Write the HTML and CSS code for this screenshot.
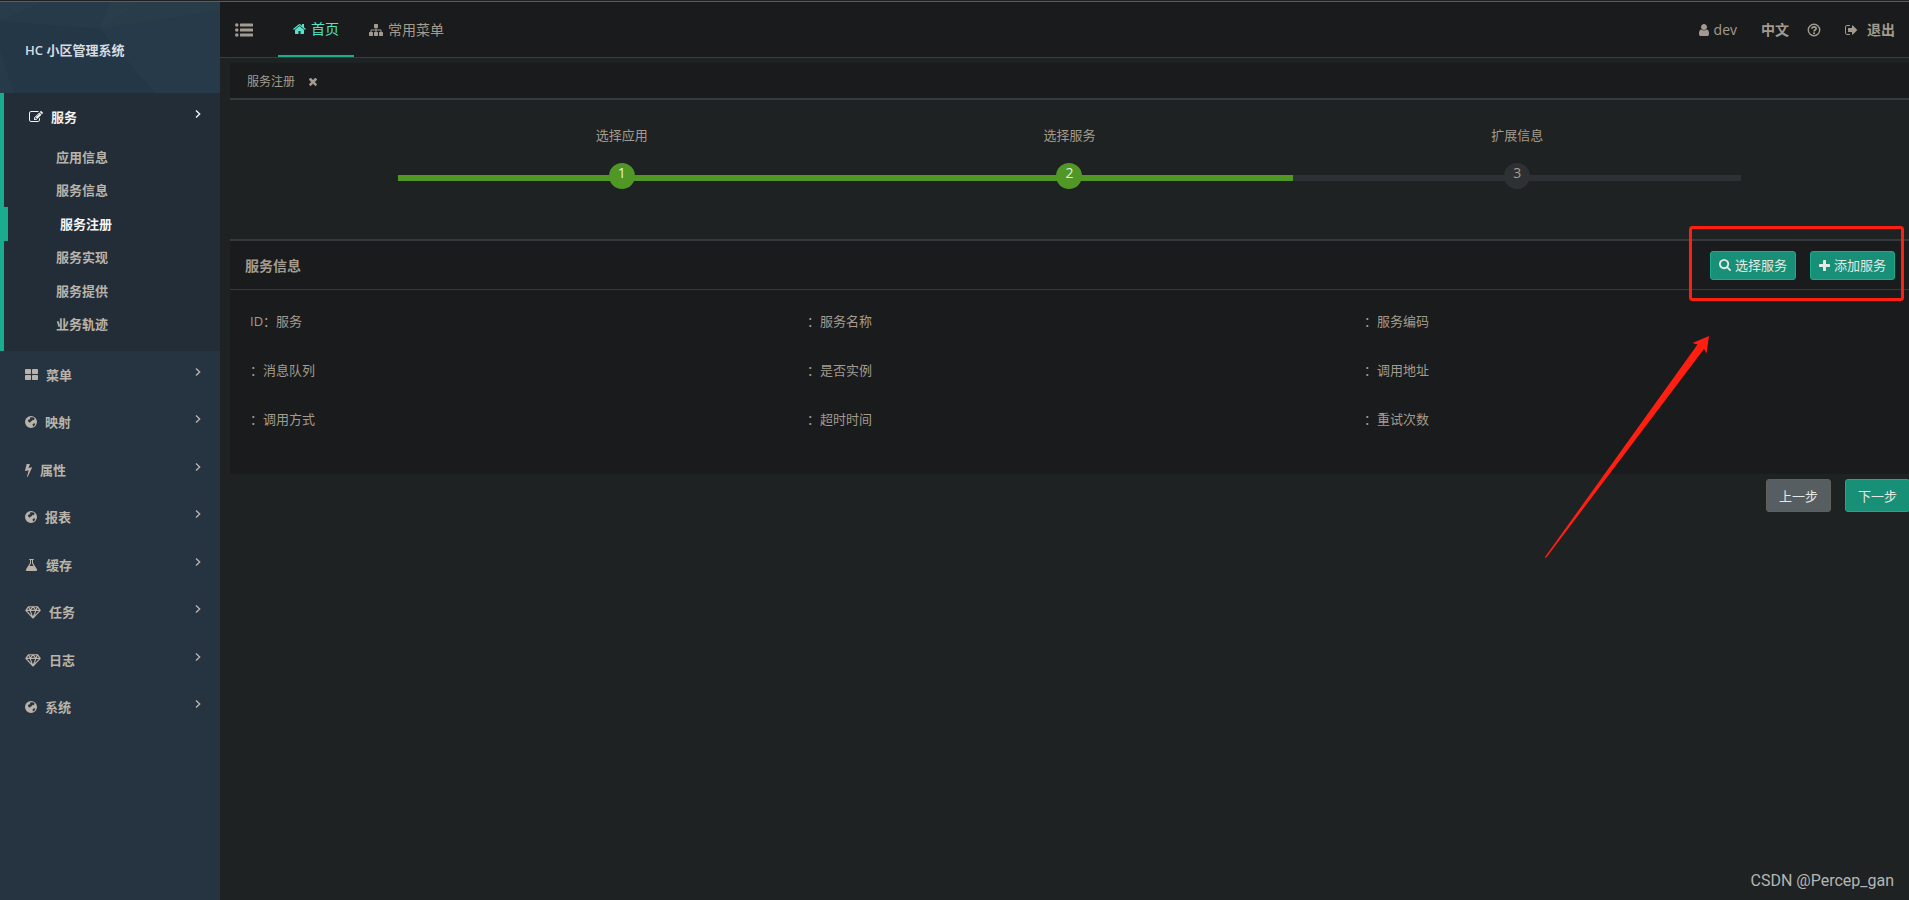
FILE: index.html
```html
<!DOCTYPE html>
<html lang="zh-CN">
<head>
<meta charset="utf-8">
<title>HC 小区管理系统</title>
<link rel="stylesheet" href="styles.css">
</head>
<body>
<svg class="sprite" aria-hidden="true">
  <symbol id="home" viewBox="64 0 1664 1792"><path d="M1472 992v480q0 26-19 45t-45 19h-384v-384h-256v384h-384q-26 0-45-19t-19-45v-480q0-1 .5-3t.5-3l575-474 575 474q1 2 1 6zm223-69l-62 74q-8 9-21 11h-3q-13 0-21-7l-692-577-692 577q-12 8-24 7-13-2-21-11l-62-74q-8-10-7-23.500t11-21.500l719-599q32-26 76-26t76 26l244 204v-195q0-14 9-23t23-9h192q14 0 23 9t9 23v408l219 182q10 8 11 21.500t-7 23.500z"/></symbol>
  <symbol id="sitemap" viewBox="0 0 1792 1792"><path d="M1792 1248v320q0 40-28 68t-68 28h-320q-40 0-68-28t-28-68v-320q0-40 28-68t68-28h96v-192h-512v192h96q40 0 68 28t28 68v320q0 40-28 68t-68 28h-320q-40 0-68-28t-28-68v-320q0-40 28-68t68-28h96v-192h-512v192h96q40 0 68 28t28 68v320q0 40-28 68t-68 28h-320q-40 0-68-28t-28-68v-320q0-40 28-68t68-28h96v-192q0-52 38-90t90-38h512v-192h-96q-40 0-68-28t-28-68v-320q0-40 28-68t68-28h320q40 0 68 28t28 68v320q0 40-28 68t-68 28h-96v192h512q52 0 90 38t38 90v192h96q40 0 68 28t28 68z"/></symbol>
  <symbol id="list" viewBox="0 0 18 14"><circle cx="1.800" cy="2" r="1.800"/><circle cx="1.800" cy="7" r="1.800"/><circle cx="1.800" cy="12" r="1.800"/><rect x="5" y=".5" width="13" height="3" rx=".6"/><rect x="5" y="5.500" width="13" height="3" rx=".6"/><rect x="5" y="10.500" width="13" height="3" rx=".6"/></symbol>
  <symbol id="times" viewBox="302 238 1188 1316"><path d="M1490 1322q0 40-28 68l-136 136q-28 28-68 28t-68-28l-294-294-294 294q-28 28-68 28t-68-28l-136-136q-28-28-28-68t28-68l294-294-294-294q-28-28-28-68t28-68l136-136q28-28 68-28t68 28l294 294 294-294q28-28 68-28t68 28l136 136q28 28 28 68t-28 68l-294 294 294 294q28 28 28 68z"/></symbol>
  <symbol id="user" viewBox="256 0 1280 1792"><path d="M1536 1399q0 109-62.500 187t-150.500 78h-854q-88 0-150.500-78t-62.500-187q0-85 8.500-160.500t31.500-152 58.500-131 94-89 134.500-34.500q131 128 313 128t313-128q76 0 134.500 34.500t94 89 58.500 131 31.500 152 8.500 160.500zm-256-887q0 159-112.500 271.500t-271.500 112.500-271.500-112.500-112.500-271.500 112.500-271.500 271.500-112.500 271.500 112.500 112.500 271.500z"/></symbol>
  <symbol id="question" viewBox="0 0 14 14"><circle cx="7" cy="7" r="5.700" fill="none" stroke="currentColor" stroke-width="1.400"/><path d="M4.900 5.700C5.100 3.200 9.100 3.200 9.100 5.500 9.100 7 7.100 7 7.100 8.400" fill="none" stroke="currentColor" stroke-width="1.700"/><rect x="6.200" y="9.300" width="1.800" height="1.700"/></symbol>
  <symbol id="signout" viewBox="64 0 1664 1792"><path d="M704 1440q0 4 1 20t.5 26.500-3 23.500-10 19.500-20.500 6.500h-320q-119 0-203.500-84.500t-84.500-203.500v-704q0-119 84.500-203.500t203.500-84.500h320q13 0 22.500 9.500t9.500 22.500q0 4 1 20t.5 26.500-3 23.500-10 19.500-20.500 6.500h-320q-66 0-113 47t-47 113v704q0 66 47 113t113 47h312l11.500 1 11.500 3 8 5.500 7 9 2 13.500zm928-544q0 26-19 45l-544 544q-19 19-45 19t-45-19-19-45v-288h-448q-26 0-45-19t-19-45v-384q0-26 19-45t45-19h448v-288q0-26 19-45t45-19 45 19l544 544q19 19 19 45z"/></symbol>
  <symbol id="search" viewBox="64 128 1664 1664"><path d="M1216 832q0-185-131.500-316.500t-316.500-131.500-316.500 131.500-131.500 316.500 131.500 316.500 316.500 131.500 316.500-131.500 131.500-316.500zm512 832q0 52-38 90t-90 38q-54 0-90-38l-343-342q-179 124-399 124-143 0-273.500-55.500t-225-150-150-225-55.500-273.500 55.500-273.500 150-225 225-150 273.500-55.500 273.500 55.500 225 150 150 225 55.500 273.500q0 220-124 399l343 343q37 37 37 90z"/></symbol>
  <symbol id="plus" viewBox="192 128 1408 1408"><path d="M1600 736v192q0 40-28 68t-68 28h-416v416q0 40-28 68t-68 28h-192q-40 0-68-28t-28-68v-416h-416q-40 0-68-28t-28-68v-192q0-40 28-68t68-28h416v-416q0-40 28-68t68-28h192q40 0 68 28t28 68v416h416q40 0 68 28t28 68z"/></symbol>
  <symbol id="edit" viewBox="0 0 1792 1792"><path d="M888 1184l116-116-152-152-116 116v56h96v96h56zm440-720q-16-16-33 1l-350 350q-17 17-1 33t33-1l350-350q17-17 1-33zm80 594v190q0 119-84.500 203.500t-203.500 84.500h-832q-119 0-203.500-84.500t-84.500-203.500v-832q0-119 84.500-203.500t203.500-84.500h832q63 0 117 25 15 7 18 23 3 17-9 29l-49 49q-14 14-32 8-23-6-45-6h-832q-66 0-113 47t-47 113v832q0 66 47 113t113 47h832q66 0 113-47t47-113v-126q0-13 9-22l64-64q15-15 35-7t20 29zm-96-738l288 288-672 672h-288v-288zm444 132l-92 92-288-288 92-92q28-28 68-28t68 28l152 152q28 28 28 68t-28 68z"/></symbol>
  <symbol id="thlarge" viewBox="64 0 1664 1792"><path d="M832 1024v384q0 52-38 90t-90 38h-512q-52 0-90-38t-38-90v-384q0-52 38-90t90-38h512q52 0 90 38t38 90zm0-768v384q0 52-38 90t-90 38h-512q-52 0-90-38t-38-90v-384q0-52 38-90t90-38h512q52 0 90 38t38 90zm896 768v384q0 52-38 90t-90 38h-512q-52 0-90-38t-38-90v-384q0-52 38-90t90-38h512q52 0 90 38t38 90zm0-768v384q0 52-38 90t-90 38h-512q-52 0-90-38t-38-90v-384q0-52 38-90t90-38h512q52 0 90 38t38 90z"/></symbol>
  <symbol id="globe" viewBox="0 0 12 14"><path fill-rule="evenodd" d="M6 1a6 6 0 1 0 0 12A6 6 0 1 0 6 1zM4.900 2.500L6.500 2.200 8.700 2.600 9.600 3.800 8.800 5.200 7.600 4.800 6.900 6 5.400 6.800 5.100 7.800 3.700 6.900 2.800 5.800 3.600 4.600 5.300 4.200zM7.600 9.200l1.500-1 1.200.6-.8 1.700-1.500 1z"/></symbol>
  <symbol id="bolt" viewBox="448 0 896 1792"><path d="M1333 566q18 20 7 44l-540 1157q-13 25-42 25-4 0-14-2-17-5-25.500-19t-4.500-30l197-808-406 101q-4 1-12 1-18 0-31-11-18-15-13-39l201-825q4-14 16-23t28-9h328q19 0 32 12.500t13 29.500q0 8-5 18l-171 463 396-98q8-2 12-2 19 0 34 15z"/></symbol>
  <symbol id="flask" viewBox="64 0 1664 1792"><path d="M1591 1448q56 89 21.500 152.500t-140.500 63.500h-1152q-106 0-140.500-63.500t21.500-152.500l503-793v-399h-64q-26 0-45-19t-19-45 19-45 45-19h512q26 0 45 19t19 45-19 45-45 19h-64v399zm-779-725l-182 287h532l-182-287-20-31v-436h-128v436z"/></symbol>
  <symbol id="diamond" viewBox="0 0 16 14"><path d="M3.600 1.700h8.800l2.800 3.700L8 13 .8 5.400zM.8 5.400h14.400M3.600 1.700l1.500 3.700L8 13l2.900-7.600 1.500-3.700M5.100 5.400L8 1.700l2.900 3.700" fill="none" stroke="currentColor" stroke-width="1.150" stroke-linejoin="round"/></symbol>
  <symbol id="angle" viewBox="0 0 6 10"><path d="M1 1.400L4.700 5 1 8.600" fill="none" stroke="currentColor" stroke-width="1.400"/></symbol>
</svg>

<div class="topline"></div>
<div class="app">
  <aside class="sidebar">
    <div class="brand">
      <svg class="brand-art" viewBox="0 0 220 91" preserveAspectRatio="none" aria-hidden="true">
        <path d="M0 19L100 27 155 91H14L0 48z" fill="#243747"/>
        <path d="M110 0L142 0 100 27z" fill="#2a3d4b"/>
        <path d="M142 0H220V8L100 27z" fill="#293c4a"/>
        <path d="M0 0H44L0 19z" fill="#283c4b"/>
      </svg>
      <span class="brand-name">HC 小区管理系统</span>
    </div>
    <nav>
      <div class="group">
        <a class="menu-link" href="#"><svg class="i w14"><use href="#edit"/></svg>服务<svg class="arrow"><use href="#angle"/></svg></a>
        <ul class="sub">
          <li><a href="#">应用信息</a></li>
          <li><a href="#">服务信息</a></li>
          <li class="current"><a href="#">服务注册</a></li>
          <li><a href="#">服务实现</a></li>
          <li><a href="#">服务提供</a></li>
          <li><a href="#">业务轨迹</a></li>
        </ul>
      </div>
      <div class="menu">
        <a class="menu-link" href="#"><svg class="i w13"><use href="#thlarge"/></svg>菜单<svg class="arrow"><use href="#angle"/></svg></a>
        <a class="menu-link" href="#"><svg class="i w12"><use href="#globe"/></svg>映射<svg class="arrow"><use href="#angle"/></svg></a>
        <a class="menu-link" href="#"><svg class="i w7"><use href="#bolt"/></svg>属性<svg class="arrow"><use href="#angle"/></svg></a>
        <a class="menu-link" href="#"><svg class="i w12"><use href="#globe"/></svg>报表<svg class="arrow"><use href="#angle"/></svg></a>
        <a class="menu-link" href="#"><svg class="i w13"><use href="#flask"/></svg>缓存<svg class="arrow"><use href="#angle"/></svg></a>
        <a class="menu-link" href="#"><svg class="i w16"><use href="#diamond"/></svg>任务<svg class="arrow"><use href="#angle"/></svg></a>
        <a class="menu-link" href="#"><svg class="i w16"><use href="#diamond"/></svg>日志<svg class="arrow"><use href="#angle"/></svg></a>
        <a class="menu-link" href="#"><svg class="i w12"><use href="#globe"/></svg>系统<svg class="arrow"><use href="#angle"/></svg></a>
      </div>
    </nav>
  </aside>

  <main class="main">
    <header class="navbar">
      <button class="toggle" type="button" aria-label="切换菜单"><svg class="i w18"><use href="#list"/></svg></button>
      <a class="nav-tab active" href="#"><svg class="i w13"><use href="#home"/></svg>首页</a>
      <a class="nav-tab" href="#"><svg class="i w14"><use href="#sitemap"/></svg>常用菜单</a>
      <div class="nav-right">
        <a class="account" href="#"><svg class="i w10"><use href="#user"/></svg>dev</a>
        <a class="strong" href="#">中文</a>
        <a href="#" aria-label="帮助"><svg class="i w14"><use href="#question"/></svg></a>
        <a class="strong logout" href="#"><svg class="i w13"><use href="#signout"/></svg>退出</a>
      </div>
    </header>

    <div class="content">
      <div class="page-tabs">
        <a href="#">服务注册</a>
        <button class="close" type="button" aria-label="关闭"><svg class="x"><use href="#times"/></svg></button>
      </div>

      <ol class="steps">
        <li class="done"><span>选择应用</span><b>1</b></li>
        <li class="done"><span>选择服务</span><b>2</b></li>
        <li><span>扩展信息</span><b>3</b></li>
      </ol>

      <section class="panel">
        <div class="panel-head">
          <h2>服务信息</h2>
          <button class="btn" type="button"><svg class="i12"><use href="#search"/></svg>选择服务</button>
          <button class="btn" type="button"><svg class="i11"><use href="#plus"/></svg>添加服务</button>
        </div>
        <div class="fields">
          <div>ID：服务</div><div>：服务名称</div><div>：服务编码</div>
          <div>：消息队列</div><div>：是否实例</div><div>：调用地址</div>
          <div>：调用方式</div><div>：超时时间</div><div>：重试次数</div>
        </div>
      </section>

      <div class="actions">
        <button class="btn large grey" type="button">上一步</button>
        <button class="btn large" type="button">下一步</button>
      </div>
    </div>
  </main>
</div>

<svg class="marks" viewBox="0 0 380 340" aria-hidden="true">
  <rect x="161.500" y="6.500" width="212" height="72" rx="2" fill="none" stroke="#ff1f10" stroke-width="3"/>
  <path d="M180 115l-16.500 7 5 1.500L16 336l1 1L175 128l2.500 4.500z" fill="#ff1f10"/>
</svg>
<div class="watermark">CSDN @Percep_gan</div>
</body>
</html>
```

FILE: styles.css
```css
* {
  box-sizing: border-box;
}

body {
  margin: 0;
  min-height: 100vh;
  display: flex;
  flex-direction: column;
  position: relative;
  overflow: hidden;
  background: #1e2222;
  color: #a39b8f;
  font: 13px/20px "Open Sans", "Noto Sans CJK SC", sans-serif;
}

a {
  color: inherit;
  text-decoration: none;
}

button {
  font: inherit;
  color: inherit;
  background: none;
  border: 0;
  padding: 0;
}

svg {
  fill: currentColor;
  flex: none;
}

.sprite {
  position: absolute;
  width: 0;
  height: 0;
}

.topline {
  height: 2px;
  background: #202023;
  border-bottom: 1px solid #5c5c60;
}

.app {
  flex: 1;
  display: flex;
}

.i { height: 14px; }
.w7 { width: 7px; }
.w10 { width: 10px; }
.w12 { width: 12px; }
.w13 { width: 13px; }
.w14 { width: 14px; }
.w16 { width: 16px; }
.w18 { width: 18px; }
.i11 { width: 11px; height: 11px; }
.i12 { width: 12px; height: 12px; }

/* Sidebar */
.sidebar {
  width: 220px;
  flex: none;
  background: #263340;
  color: #b9b3a9;
  font-weight: 600;
}

.brand {
  display: grid;
  height: 91px;
  align-items: center;
  background: #263a49;
  color: #d5dce2;
}

.brand-art,
.brand-name {
  grid-area: 1 / 1;
}

.brand-art {
  width: 100%;
  height: 91px;
}

.brand-name {
  padding: 4px 25px 0;
  z-index: 1;
}

.group {
  background: #222d38;
  border-left: 4px solid #1aac8f;
  padding-bottom: 10px;
}

.menu-link {
  display: flex;
  align-items: center;
  gap: 8px;
  padding: 0 19px 0 25px;
}

.group > .menu-link {
  height: 47px;
  color: #f2f2f0;
}

.arrow {
  width: 6px;
  height: 10px;
  margin: 0 0 6px auto;
}

.sub {
  list-style: none;
  margin: 0;
  padding: 0;
  height: 201px;
  display: grid;
  grid-auto-rows: 1fr;
}

.sub li {
  display: flex;
  align-items: center;
  padding-left: 52px;
}

.sub .current {
  border-left: 4px solid #1aac8f;
  color: #f5f5f3;
}

.menu {
  display: grid;
  grid-auto-rows: 1fr;
  height: 380px;
}

/* Top bar */
.main {
  flex: 1;
  min-width: 0;
  overflow: hidden;
}

.navbar {
  display: flex;
  height: 56px;
  background: #1a1b1c;
  border-bottom: 1px solid #3d3b3e;
  font-size: 14px;
}

.toggle {
  display: flex;
  align-items: center;
  padding: 0 25px 0 15px;
}

.nav-tab {
  display: flex;
  align-items: center;
  gap: 5px;
  padding: 0 15px;
}

.nav-tab.active {
  color: #53e3c8;
  border-bottom: 2px solid #1aac8f;
}

.nav-right {
  margin-left: auto;
  padding-right: 14px;
  display: flex;
  align-items: center;
  gap: 24px;
}

.nav-right a {
  display: flex;
  align-items: center;
  gap: 5px;
}

.nav-right .strong {
  font-weight: 600;
}

.nav-right .strong + a {
  margin-left: -6px;
}

.nav-right .logout {
  gap: 9px;
}

/* Content */
.content {
  padding: 5px 0 0 10px;
}

.page-tabs {
  display: flex;
  align-items: center;
  gap: 14px;
  height: 37px;
  padding: 2px 0 0 17px;
  background: #1a1b1c;
  border-bottom: 2px solid #363a3d;
  font-size: 12px;
}

.close {
  display: flex;
}

.x {
  width: 8px;
  height: 9px;
}

.steps {
  list-style: none;
  display: grid;
  grid-template-columns: repeat(3, 1fr);
  width: 80%;
  margin: 25px auto 50px;
  padding: 0;
  text-align: center;
}

.steps li {
  display: grid;
  row-gap: 18px;
  justify-items: center;
  background: linear-gradient(#2d3134, #2d3134) 0 50px / 100% 6px no-repeat;
}

.steps .done {
  background-image: linear-gradient(#509726, #509726);
}

.steps b {
  width: 26px;
  height: 26px;
  border-radius: 50%;
  background: #2d3134;
  font-size: 14px;
  font-weight: 400;
  line-height: 20px;
}

.steps .done b {
  background: #509726;
  color: #e6ecdf;
}

.panel {
  background: #1a1b1c;
  border-top: 2px solid #363a3d;
}

.panel-head {
  display: flex;
  align-items: center;
  gap: 14px;
  height: 49px;
  padding: 0 14px 0 15px;
  border-bottom: 1px solid #363a3d;
}

.panel-head h2 {
  flex: 1;
  margin: 0;
  padding-top: 2px;
  font-size: 14px;
  font-weight: 600;
}

.btn {
  display: flex;
  align-items: center;
  justify-content: center;
  gap: 4px;
  height: 29px;
  padding: 0 8px;
  border: 1px solid #1aac8f;
  border-radius: 3px;
  background: #188f77;
  color: #e4e9e4;
}

.btn.large {
  height: 33px;
  padding: 0 12px;
}

.btn.grey {
  background: #575e62;
  border-color: #665f55;
}

.fields {
  display: grid;
  grid-template-columns: repeat(3, 1fr);
  row-gap: 29px;
  padding: 21px 0 45px;
  margin: 0 -12px 0 20px;
}

.actions {
  display: flex;
  justify-content: flex-end;
  gap: 14px;
  margin: 5px -1px 0 0;
}

/* Overlays */
.marks {
  position: absolute;
  top: 221px;
  right: 0;
  width: 380px;
  height: 340px;
}

.watermark {
  position: absolute;
  right: 15px;
  bottom: 9px;
  color: #b4b6b6;
  font: 16px/20px Roboto, sans-serif;
}
```
